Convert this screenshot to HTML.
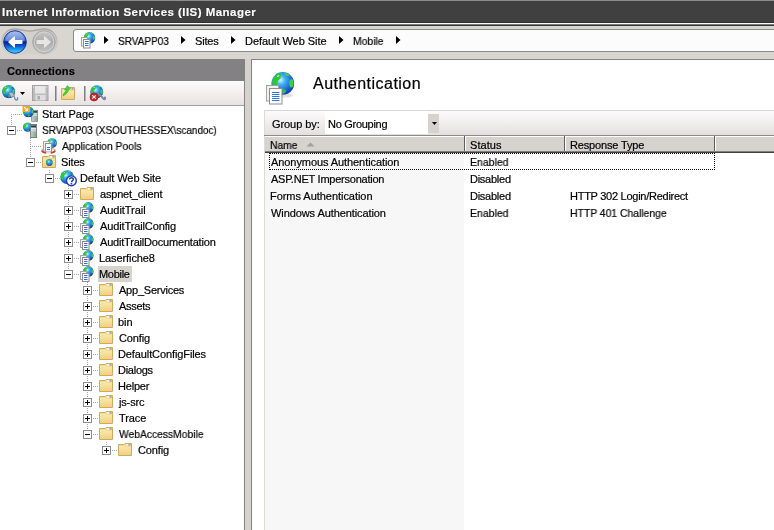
<!DOCTYPE html>
<html><head><meta charset="utf-8">
<style>
*{margin:0;padding:0;box-sizing:border-box}
html,body{width:774px;height:530px;overflow:hidden;background:#fff}
body{position:relative;font-family:"Liberation Sans",sans-serif;font-size:11px;color:#000}
.a{position:absolute}
.t{position:absolute;white-space:nowrap;line-height:13px;height:13px;will-change:transform;-webkit-text-stroke:0.2px currentColor}
svg.i{position:absolute;overflow:visible}
</style></head><body>


<svg width="0" height="0" style="position:absolute">
<defs>
 <radialGradient id="gGlobe" cx="0.4" cy="0.35" r="0.7">
  <stop offset="0" stop-color="#d4f6ff"/><stop offset="0.3" stop-color="#3cb2f2"/><stop offset="0.68" stop-color="#1f68d8"/><stop offset="1" stop-color="#1234a4"/>
 </radialGradient>
 <linearGradient id="gFold" x1="0" y1="0" x2="0" y2="1">
  <stop offset="0" stop-color="#fbe9b0"/><stop offset="1" stop-color="#f0d080"/>
 </linearGradient>
 <linearGradient id="gBack" x1="0" y1="0" x2="0" y2="1">
  <stop offset="0" stop-color="#9ab8f2"/><stop offset="0.42" stop-color="#4a72d0"/><stop offset="0.5" stop-color="#08208a"/><stop offset="0.6" stop-color="#0a3cba"/><stop offset="0.85" stop-color="#1ea4f4"/><stop offset="1" stop-color="#58d8ff"/>
 </linearGradient>
 <linearGradient id="gFwd" x1="0" y1="0" x2="0" y2="1">
  <stop offset="0" stop-color="#c8c8c8"/><stop offset="0.5" stop-color="#acacac"/><stop offset="1" stop-color="#c4c4c4"/>
 </linearGradient>
 <linearGradient id="gCap" x1="0" y1="0" x2="0" y2="1"><stop offset="0" stop-color="#a9a6a1"/><stop offset="0.5" stop-color="#c6c3be"/><stop offset="1" stop-color="#d6d3ce"/></linearGradient>
 <symbol id="globe" viewBox="0 0 24 24">
  <circle cx="12" cy="12" r="11.6" fill="url(#gGlobe)"/>
  <path d="M2.2 7 C4 3.6 7 2 10.5 1.6 C10.2 3.5 9.5 5 10 6.5 C9 8.5 7 8.2 6.5 10.5 C6 12.5 7.2 14.5 5.5 16.5 C4.5 17.2 3.5 16.5 2.6 15.5 C0.8 12.6 1 9.5 2.2 7Z" fill="#2ec82e"/>
  <path d="M6 4.5 C7 3.6 8.2 3.4 8.8 4 C8.4 5 7.2 5.6 6.3 5.5Z" fill="#d8f0b0"/>
  <path d="M13.5 1 C16 1.2 18 2.2 19.2 3.5 C18.3 4.3 17 4 16 4.6 C15 3.8 13.6 2.6 13.5 1Z" fill="#44d444"/>
  <ellipse cx="20.8" cy="12" rx="2.2" ry="4.2" fill="#3fd03f"/>
  <path d="M11 18.5 C12.8 17.6 15.2 18 15.5 19.6 C14.8 21.5 13.2 22.8 11.8 22.5 C11.5 21 11.8 19.8 11 18.5Z" fill="#33c033"/>
 </symbol>
 <symbol id="folder" viewBox="0 0 14 13">
  <path d="M0.5 1.5 H6 L7 0.5 H13.5 V12.5 H0.5Z" fill="#f4d98e" stroke="#cfab60" stroke-width="1"/>
  <path d="M1 3 H6.5 L7.5 4 H13 V12 H1Z" fill="url(#gFold)"/>
  <rect x="8" y="1.3" width="2.5" height="1.2" fill="#ffffff"/><rect x="10.5" y="1.3" width="2" height="1.2" fill="#4f9ae8"/>
 </symbol>
 <symbol id="doc2" viewBox="0 0 10 10">
  <rect x="0.5" y="0.5" width="6" height="7.5" fill="#f2f1ea" stroke="#a0a0a0"/>
  <rect x="2.5" y="2" width="6.5" height="7.5" fill="#fcfcfa" stroke="#8a8a8a"/>
  <path d="M4 4.1 H7.6 M4 5.8 H7.6 M4 7.5 H7.6" stroke="#2a78d8" stroke-width="1"/>
 </symbol>
 <symbol id="app" viewBox="0 0 16 16">
  <use href="#globe" x="2.8" y="-0.1" width="11" height="11"/>
  <rect x="0.5" y="5.5" width="6" height="8" fill="#f5f2e4" stroke="#a6a6a6"/>
  <rect x="2.5" y="7.5" width="6.5" height="8" fill="#fdfdfb" stroke="#8c8c8c"/>
  <path d="M4 9.5 H7.5 M4 11.5 H7.5 M4 13.5 H7.5" stroke="#2f74d6" stroke-width="1" fill="none"/>
 </symbol>
 <symbol id="server" viewBox="0 0 7 12" preserveAspectRatio="none">
  <rect x="0.4" y="0.4" width="6.2" height="11.2" fill="url(#gSrv)" stroke="#6d7680" stroke-width="0.8"/>
  <rect x="1" y="1.3" width="5" height="1.5" fill="#25384a"/>
  <rect x="1" y="3.6" width="5" height="1" fill="#f0f3f6"/>
  <rect x="1" y="5.4" width="5" height="0.8" fill="#dde2e6"/>
  <rect x="4" y="8.6" width="2" height="2" fill="#66d42e"/>
 </symbol>
 <linearGradient id="gSrv" x1="0" y1="0" x2="1" y2="0">
  <stop offset="0" stop-color="#c6ccd2"/><stop offset="1" stop-color="#98a0a8"/>
 </linearGradient>
</defs>
</svg>

<div class="a" style="left:0px;top:0px;width:774px;height:1px;background:#8e8c8e;"></div>
<div class="a" style="left:0px;top:1px;width:774px;height:22px;background:#404040;"></div>
<div class="a" style="left:0px;top:22px;width:774px;height:1px;background:#303030;"></div>
<div class="a" style="left:0px;top:23px;width:774px;height:1px;background:#fafafa;"></div>
<div class="a" style="left:0px;top:24px;width:774px;height:1px;background:#787878;"></div>
<div class="a" style="left:0px;top:25px;width:774px;height:1px;background:#383838;"></div>
<div class="a" style="left:0px;top:26px;width:774px;height:33px;background:#d9d6d1;"></div>
<svg class="i" style="left:0px;top:26px" width="60" height="32" viewBox="0 0 60 32"><path d="M15 3 C20 3 24 5 29.5 5 C35 5 39 3 44 3 C52 3 57 9 57 16 C57 23 52 29 44 29 C39 29 35 27 29.5 27 C24 27 20 29 15 29 C7 29 2 23 2 16 C2 9 7 3 15 3Z" fill="#d3d0cb" stroke="url(#gCap)" stroke-width="1.4"/></svg>
<svg class="i" style="left:3px;top:30px" width="24" height="24" viewBox="0 0 24 24"><circle cx="12" cy="12" r="11.3" fill="url(#gBack)" stroke="#0b2a8c" stroke-width="0.9"/>
<path d="M2.5 11 C3.5 5 8 1.8 12 1.8 C16 1.8 20.5 5 21.5 11 Z" fill="#ffffff" opacity="0.18"/>
<path d="M5 12 L11.3 6.3 Q12 6 12 7 L12 10 L18.5 10 Q19.5 10 19.5 11 L19.5 13 Q19.5 14 18.5 14 L12 14 L12 17 Q12 18 11.3 17.7 Z" fill="#ffffff"/></svg>
<svg class="i" style="left:32px;top:30px" width="24" height="24" viewBox="0 0 24 24"><circle cx="12" cy="12" r="11.3" fill="url(#gFwd)" stroke="#a4a4a4" stroke-width="0.9"/>
<circle cx="12" cy="12" r="9.8" fill="none" stroke="#d8d8d8" stroke-width="0.8"/>
<path d="M19 12 L12.7 6.3 Q12 6 12 7 L12 10 L5.5 10 Q4.5 10 4.5 11 L4.5 13 Q4.5 14 5.5 14 L12 14 L12 17 Q12 18 12.7 17.7 Z" fill="#e6e6e6"/></svg>
<div class="a" style="left:73px;top:29px;width:720px;height:23px;background:#fdfcfd;border:1px solid #8a8a8a;border-radius:3px"></div>
<svg class="i" style="left:80px;top:31px" width="17" height="18" viewBox="0 0 17 18"><use href="#globe" x="3.5" y="0.8" width="12" height="12"/>
<rect x="1.5" y="6.5" width="6" height="8.5" fill="#f5f2e4" stroke="#a6a6a6"/>
<rect x="3.5" y="8.5" width="6.5" height="8.5" fill="#fdfdfb" stroke="#8c8c8c"/>
<path d="M5 10.5 H8.5 M5 12.5 H8.5 M5 14.5 H8.5" stroke="#2f74d6" stroke-width="1" fill="none"/></svg>
<svg class="i" style="left:104px;top:36px" width="5" height="8" viewBox="0 0 5 8"><path d="M0 0 L4.5 4 L0 8Z" fill="#000"/></svg>
<svg class="i" style="left:181px;top:36px" width="5" height="8" viewBox="0 0 5 8"><path d="M0 0 L4.5 4 L0 8Z" fill="#000"/></svg>
<svg class="i" style="left:231px;top:36px" width="5" height="8" viewBox="0 0 5 8"><path d="M0 0 L4.5 4 L0 8Z" fill="#000"/></svg>
<svg class="i" style="left:339px;top:36px" width="5" height="8" viewBox="0 0 5 8"><path d="M0 0 L4.5 4 L0 8Z" fill="#000"/></svg>
<svg class="i" style="left:396px;top:36px" width="5" height="8" viewBox="0 0 5 8"><path d="M0 0 L4.5 4 L0 8Z" fill="#000"/></svg>
<div class="a" style="left:0px;top:59px;width:244px;height:22px;background:#848184;"></div>
<div class="t" style="left:7px;top:65px;letter-spacing:0.12px;font-weight:bold">Connections</div>
<div class="a" style="left:0px;top:81px;width:244px;height:24px;background:linear-gradient(#fdfbfc,#e8e3e3);"></div>
<div class="a" style="left:0px;top:105px;width:244px;height:1px;background:#a4a1a1;"></div>
<div class="a" style="left:244px;top:59px;width:1px;height:471px;background:#848484;"></div>
<div class="a" style="left:245px;top:59px;width:6px;height:471px;background:#d6d3ce;"></div>
<div class="a" style="left:251px;top:59px;width:1px;height:471px;background:#848484;"></div>
<div class="a" style="left:252px;top:59px;width:522px;height:1px;background:#848484;"></div>
<div class="t" style="left:2.00px;top:6px;letter-spacing:0.457px;font:bold 11.5px 'Liberation Sans';line-height:normal;height:auto;color:#fff;text-shadow:0 0 1px #000;">Internet Information Services (IIS) Manager</div>
<div class="t" style="left:118.00px;top:35px;transform:scaleX(0.9094);transform-origin:1px 0;">SRVAPP03</div>
<div class="t" style="left:195.00px;top:35px;letter-spacing:-0.200px;">Sites</div>
<div class="t" style="left:245.00px;top:35px;letter-spacing:-0.053px;">Default Web Site</div>
<div class="t" style="left:353.00px;top:35px;transform:scaleX(0.9400);transform-origin:1px 0;">Mobile</div>
<svg class="i" style="left:1px;top:84px" width="18" height="17" viewBox="0 0 18 17"><use href="#globe" x="0.8" y="0.8" width="13.6" height="13.6"/>
<path d="M13 12.5 C14.5 13.5 13 15.5 15 16 C16.5 16.3 17 15 16.5 13.8" stroke="#6f8fa8" stroke-width="1.4" fill="none" stroke-linecap="round"/>
<path d="M7.5 9 L11 8 L13.5 11.5 L10.5 13.5 Z" fill="#b9c3cc" stroke="#6a7884" stroke-width="0.7"/></svg>
<svg class="i" style="left:20px;top:92px" width="5" height="3" viewBox="0 0 5 3"><path d="M0 0 H5 L2.5 3Z" fill="#000"/></svg>
<svg class="i" style="left:32px;top:85px" width="17" height="16" viewBox="0 0 17 16"><rect x="0.5" y="0.5" width="15.5" height="15" fill="#bdbdbd" stroke="#a2a2a2"/>
<rect x="3" y="1" width="10.5" height="7.5" fill="#e8e8e8"/>
<rect x="3.5" y="10" width="10" height="5.5" fill="#dedede"/><rect x="5.5" y="11" width="2.5" height="3.5" fill="#aaaaaa"/>
<rect x="1.2" y="1.5" width="1" height="1" fill="#f4f4f4"/><rect x="14.3" y="1.5" width="1" height="1" fill="#f4f4f4"/></svg>
<div class="a" style="left:55px;top:86px;width:1px;height:15px;background:#808080;"></div>
<div class="a" style="left:56px;top:86px;width:1px;height:15px;background:#b4b4b4;"></div>
<svg class="i" style="left:61px;top:85px" width="15" height="15" viewBox="0 0 15 15"><use href="#folder" x="0" y="2" width="14" height="13"/>
<path d="M2 11 C2.3 7.8 5 6.8 5.5 4.6 L3.6 4.9 L6.4 0.6 L9.6 4.1 L7.6 4.3 C7.4 7.8 4.6 9.4 2 11Z" fill="#45d43c" stroke="#2aa828" stroke-width="0.6"/></svg>
<div class="a" style="left:84px;top:86px;width:1px;height:15px;background:#808080;"></div>
<div class="a" style="left:85px;top:86px;width:1px;height:15px;background:#b4b4b4;"></div>
<svg class="i" style="left:89px;top:84px" width="18" height="18" viewBox="0 0 18 18"><use href="#globe" x="1" y="1" width="13.5" height="13.5"/>
<path d="M9 10 L12 12 M11 11 C13 12 13 14 15 15 C16 15.5 16.5 14.5 16 13.5" stroke="#7a8a96" stroke-width="2" fill="none" stroke-linecap="round"/>
<circle cx="5" cy="13" r="4" fill="#d42222" stroke="#a01010" stroke-width="0.6"/>
<path d="M3.3 11.3 L6.7 14.7 M6.7 11.3 L3.3 14.7" stroke="#fff" stroke-width="1.2"/></svg>
<svg class="i" style="left:0;top:0" width="244" height="530" viewBox="0 0 244 530"><g fill="#a3a3a3"><rect x="11" y="114" width="1" height="1"/><rect x="11" y="116" width="1" height="1"/><rect x="11" y="118" width="1" height="1"/><rect x="11" y="120" width="1" height="1"/><rect x="11" y="122" width="1" height="1"/><rect x="11" y="124" width="1" height="1"/><rect x="13" y="114" width="1" height="1"/><rect x="15" y="114" width="1" height="1"/><rect x="17" y="114" width="1" height="1"/><rect x="17" y="130" width="1" height="1"/><rect x="19" y="114" width="1" height="1"/><rect x="19" y="130" width="1" height="1"/><rect x="21" y="114" width="1" height="1"/><rect x="21" y="130" width="1" height="1"/><rect x="30" y="138" width="1" height="1"/><rect x="30" y="140" width="1" height="1"/><rect x="30" y="142" width="1" height="1"/><rect x="30" y="144" width="1" height="1"/><rect x="30" y="146" width="1" height="1"/><rect x="30" y="148" width="1" height="1"/><rect x="30" y="150" width="1" height="1"/><rect x="30" y="152" width="1" height="1"/><rect x="30" y="154" width="1" height="1"/><rect x="30" y="156" width="1" height="1"/><rect x="32" y="146" width="1" height="1"/><rect x="34" y="146" width="1" height="1"/><rect x="36" y="146" width="1" height="1"/><rect x="36" y="162" width="1" height="1"/><rect x="38" y="146" width="1" height="1"/><rect x="38" y="162" width="1" height="1"/><rect x="40" y="146" width="1" height="1"/><rect x="40" y="162" width="1" height="1"/><rect x="49" y="170" width="1" height="1"/><rect x="49" y="172" width="1" height="1"/><rect x="55" y="178" width="1" height="1"/><rect x="57" y="178" width="1" height="1"/><rect x="59" y="178" width="1" height="1"/><rect x="68" y="186" width="1" height="1"/><rect x="68" y="188" width="1" height="1"/><rect x="68" y="200" width="1" height="1"/><rect x="68" y="202" width="1" height="1"/><rect x="68" y="204" width="1" height="1"/><rect x="68" y="216" width="1" height="1"/><rect x="68" y="218" width="1" height="1"/><rect x="68" y="220" width="1" height="1"/><rect x="68" y="232" width="1" height="1"/><rect x="68" y="234" width="1" height="1"/><rect x="68" y="236" width="1" height="1"/><rect x="68" y="248" width="1" height="1"/><rect x="68" y="250" width="1" height="1"/><rect x="68" y="252" width="1" height="1"/><rect x="68" y="264" width="1" height="1"/><rect x="68" y="266" width="1" height="1"/><rect x="68" y="268" width="1" height="1"/><rect x="74" y="194" width="1" height="1"/><rect x="74" y="210" width="1" height="1"/><rect x="74" y="226" width="1" height="1"/><rect x="74" y="242" width="1" height="1"/><rect x="74" y="258" width="1" height="1"/><rect x="74" y="274" width="1" height="1"/><rect x="76" y="194" width="1" height="1"/><rect x="76" y="210" width="1" height="1"/><rect x="76" y="226" width="1" height="1"/><rect x="76" y="242" width="1" height="1"/><rect x="76" y="258" width="1" height="1"/><rect x="76" y="274" width="1" height="1"/><rect x="78" y="194" width="1" height="1"/><rect x="78" y="210" width="1" height="1"/><rect x="78" y="226" width="1" height="1"/><rect x="78" y="242" width="1" height="1"/><rect x="78" y="258" width="1" height="1"/><rect x="78" y="274" width="1" height="1"/><rect x="87" y="282" width="1" height="1"/><rect x="87" y="284" width="1" height="1"/><rect x="87" y="296" width="1" height="1"/><rect x="87" y="298" width="1" height="1"/><rect x="87" y="300" width="1" height="1"/><rect x="87" y="312" width="1" height="1"/><rect x="87" y="314" width="1" height="1"/><rect x="87" y="316" width="1" height="1"/><rect x="87" y="328" width="1" height="1"/><rect x="87" y="330" width="1" height="1"/><rect x="87" y="332" width="1" height="1"/><rect x="87" y="344" width="1" height="1"/><rect x="87" y="346" width="1" height="1"/><rect x="87" y="348" width="1" height="1"/><rect x="87" y="360" width="1" height="1"/><rect x="87" y="362" width="1" height="1"/><rect x="87" y="364" width="1" height="1"/><rect x="87" y="376" width="1" height="1"/><rect x="87" y="378" width="1" height="1"/><rect x="87" y="380" width="1" height="1"/><rect x="87" y="392" width="1" height="1"/><rect x="87" y="394" width="1" height="1"/><rect x="87" y="396" width="1" height="1"/><rect x="87" y="408" width="1" height="1"/><rect x="87" y="410" width="1" height="1"/><rect x="87" y="412" width="1" height="1"/><rect x="87" y="424" width="1" height="1"/><rect x="87" y="426" width="1" height="1"/><rect x="87" y="428" width="1" height="1"/><rect x="93" y="290" width="1" height="1"/><rect x="93" y="306" width="1" height="1"/><rect x="93" y="322" width="1" height="1"/><rect x="93" y="338" width="1" height="1"/><rect x="93" y="354" width="1" height="1"/><rect x="93" y="370" width="1" height="1"/><rect x="93" y="386" width="1" height="1"/><rect x="93" y="402" width="1" height="1"/><rect x="93" y="418" width="1" height="1"/><rect x="93" y="434" width="1" height="1"/><rect x="95" y="290" width="1" height="1"/><rect x="95" y="306" width="1" height="1"/><rect x="95" y="322" width="1" height="1"/><rect x="95" y="338" width="1" height="1"/><rect x="95" y="354" width="1" height="1"/><rect x="95" y="370" width="1" height="1"/><rect x="95" y="386" width="1" height="1"/><rect x="95" y="402" width="1" height="1"/><rect x="95" y="418" width="1" height="1"/><rect x="95" y="434" width="1" height="1"/><rect x="97" y="290" width="1" height="1"/><rect x="97" y="306" width="1" height="1"/><rect x="97" y="322" width="1" height="1"/><rect x="97" y="338" width="1" height="1"/><rect x="97" y="354" width="1" height="1"/><rect x="97" y="370" width="1" height="1"/><rect x="97" y="386" width="1" height="1"/><rect x="97" y="402" width="1" height="1"/><rect x="97" y="418" width="1" height="1"/><rect x="97" y="434" width="1" height="1"/><rect x="106" y="442" width="1" height="1"/><rect x="106" y="444" width="1" height="1"/><rect x="112" y="450" width="1" height="1"/><rect x="114" y="450" width="1" height="1"/><rect x="116" y="450" width="1" height="1"/></g></svg>
<svg class="i" style="left:22px;top:106px" width="17" height="17" viewBox="0 0 17 17"><use href="#server" x="9.2" y="3.8" width="7" height="12"/>
<use href="#globe" x="0.8" y="0.2" width="11.2" height="11.2"/>
<rect x="0.5" y="0" width="7.5" height="6" fill="#f5a623"/>
<path d="M2 1.2 L5.2 4.2 M5.6 2.2 V4.6 H3.2" stroke="#fff" stroke-width="1.1" fill="none"/></svg>
<div class="t" style="left:42.00px;top:108px;letter-spacing:0.022px;">Start Page</div>
<svg class="i" style="left:7px;top:126px" width="9" height="9" viewBox="0 0 9 9"><rect x="0.5" y="0.5" width="8" height="8" fill="#fff" stroke="#8c8c8c"/><rect x="2" y="4" width="5" height="1" fill="#000"/></svg>
<svg class="i" style="left:22px;top:122px" width="17" height="17" viewBox="0 0 17 17"><use href="#globe" x="0.8" y="0.3" width="9.6" height="9.6"/>
<use href="#server" x="8" y="2" width="7" height="14"/></svg>
<div class="t" style="left:42.00px;top:124px;transform:scaleX(0.9063);transform-origin:1px 0;">SRVAPP03 (XSOUTHESSEX\scandoc)</div>
<svg class="i" style="left:41px;top:138px" width="17" height="17" viewBox="0 0 17 17"><ellipse cx="7.5" cy="12.6" rx="6.8" ry="2.3" fill="none" stroke="#b4b4b4" stroke-width="1.2"/>
<use href="#globe" x="5.9" y="0" width="10.2" height="10.2"/>
<rect x="2.5" y="3.5" width="6" height="9.5" fill="#f6f3e4" stroke="#a8a8a8"/>
<rect x="4.5" y="5.5" width="6" height="8.5" fill="#fdfdfb" stroke="#929292"/>
<path d="M6 9.5 H9 M6 11.5 H9" stroke="#2f74d6" stroke-width="1" fill="none"/>
<path d="M0.9 12.8 Q2 14.6 5.2 15" stroke="#e2301e" stroke-width="1.7" fill="none"/>
<path d="M14.1 12.8 Q13 14.6 9.8 15" stroke="#e2301e" stroke-width="1.7" fill="none"/>
<path d="M5.2 15 H9.8" stroke="#f4f4f4" stroke-width="1.4"/></svg>
<div class="t" style="left:62.00px;top:140px;transform:scaleX(0.9422);transform-origin:0px 0;">Application Pools</div>
<svg class="i" style="left:26px;top:158px" width="9" height="9" viewBox="0 0 9 9"><rect x="0.5" y="0.5" width="8" height="8" fill="#fff" stroke="#8c8c8c"/><rect x="2" y="4" width="5" height="1" fill="#000"/></svg>
<svg class="i" style="left:41px;top:154px" width="16" height="16" viewBox="0 0 16 16"><use href="#folder" x="1" y="1" width="14" height="13"/><use href="#globe" x="4.8" y="5" width="7" height="7"/></svg>
<div class="t" style="left:61.00px;top:156px;letter-spacing:-0.150px;">Sites</div>
<svg class="i" style="left:45px;top:174px" width="9" height="9" viewBox="0 0 9 9"><rect x="0.5" y="0.5" width="8" height="8" fill="#fff" stroke="#8c8c8c"/><rect x="2" y="4" width="5" height="1" fill="#000"/></svg>
<svg class="i" style="left:58px;top:170px" width="19" height="18" viewBox="0 0 19 18"><use href="#globe" x="2" y="0" width="14.2" height="14.2"/>
<circle cx="13.4" cy="10.8" r="4.9" fill="#fff" stroke="#1c3cb4" stroke-width="1.4"/>
<path d="M11.6 9.5 C11.6 7.2 15.3 7.2 15.3 9.2 C15.3 10.6 13.5 10.7 13.5 12.2" stroke="#1c3cb4" stroke-width="1.5" fill="none"/>
<rect x="12.7" y="13" width="1.6" height="1.5" fill="#1c3cb4"/></svg>
<div class="t" style="left:80.00px;top:172px;letter-spacing:-0.080px;">Default Web Site</div>
<svg class="i" style="left:64px;top:190px" width="9" height="9" viewBox="0 0 9 9"><rect x="0.5" y="0.5" width="8" height="8" fill="#fff" stroke="#8c8c8c"/><rect x="2" y="4" width="5" height="1" fill="#000"/><rect x="4" y="2" width="1" height="5" fill="#000"/></svg>
<svg class="i" style="left:80px;top:187px" width="14" height="13" viewBox="0 0 14 13"><use href="#folder" width="14" height="13"/></svg>
<div class="t" style="left:100.00px;top:188px;letter-spacing:-0.192px;">aspnet_client</div>
<svg class="i" style="left:64px;top:206px" width="9" height="9" viewBox="0 0 9 9"><rect x="0.5" y="0.5" width="8" height="8" fill="#fff" stroke="#8c8c8c"/><rect x="2" y="4" width="5" height="1" fill="#000"/><rect x="4" y="2" width="1" height="5" fill="#000"/></svg>
<svg class="i" style="left:80px;top:202px" width="16" height="16" viewBox="0 0 16 16"><use href="#app" width="16" height="16"/></svg>
<div class="t" style="left:100.00px;top:204px;letter-spacing:-0.044px;">AuditTrail</div>
<svg class="i" style="left:64px;top:222px" width="9" height="9" viewBox="0 0 9 9"><rect x="0.5" y="0.5" width="8" height="8" fill="#fff" stroke="#8c8c8c"/><rect x="2" y="4" width="5" height="1" fill="#000"/><rect x="4" y="2" width="1" height="5" fill="#000"/></svg>
<svg class="i" style="left:80px;top:218px" width="16" height="16" viewBox="0 0 16 16"><use href="#app" width="16" height="16"/></svg>
<div class="t" style="left:100.00px;top:220px;letter-spacing:-0.120px;">AuditTrailConfig</div>
<svg class="i" style="left:64px;top:238px" width="9" height="9" viewBox="0 0 9 9"><rect x="0.5" y="0.5" width="8" height="8" fill="#fff" stroke="#8c8c8c"/><rect x="2" y="4" width="5" height="1" fill="#000"/><rect x="4" y="2" width="1" height="5" fill="#000"/></svg>
<svg class="i" style="left:80px;top:234px" width="16" height="16" viewBox="0 0 16 16"><use href="#app" width="16" height="16"/></svg>
<div class="t" style="left:100.00px;top:236px;letter-spacing:-0.195px;">AuditTrailDocumentation</div>
<svg class="i" style="left:64px;top:254px" width="9" height="9" viewBox="0 0 9 9"><rect x="0.5" y="0.5" width="8" height="8" fill="#fff" stroke="#8c8c8c"/><rect x="2" y="4" width="5" height="1" fill="#000"/><rect x="4" y="2" width="1" height="5" fill="#000"/></svg>
<svg class="i" style="left:80px;top:250px" width="16" height="16" viewBox="0 0 16 16"><use href="#app" width="16" height="16"/></svg>
<div class="t" style="left:99.00px;top:252px;letter-spacing:-0.090px;">Laserfiche8</div>
<svg class="i" style="left:64px;top:270px" width="9" height="9" viewBox="0 0 9 9"><rect x="0.5" y="0.5" width="8" height="8" fill="#fff" stroke="#8c8c8c"/><rect x="2" y="4" width="5" height="1" fill="#000"/></svg>
<svg class="i" style="left:80px;top:266px" width="16" height="16" viewBox="0 0 16 16"><use href="#app" width="16" height="16"/></svg>
<div class="a" style="left:98px;top:266px;width:34px;height:16px;background:#d7d4cf;"></div>
<div class="t" style="left:99.00px;top:268px;letter-spacing:-0.300px;">Mobile</div>
<svg class="i" style="left:83px;top:286px" width="9" height="9" viewBox="0 0 9 9"><rect x="0.5" y="0.5" width="8" height="8" fill="#fff" stroke="#8c8c8c"/><rect x="2" y="4" width="5" height="1" fill="#000"/><rect x="4" y="2" width="1" height="5" fill="#000"/></svg>
<svg class="i" style="left:99px;top:283px" width="14" height="13" viewBox="0 0 14 13"><use href="#folder" width="14" height="13"/></svg>
<div class="t" style="left:119.00px;top:284px;letter-spacing:-0.227px;">App_Services</div>
<svg class="i" style="left:83px;top:302px" width="9" height="9" viewBox="0 0 9 9"><rect x="0.5" y="0.5" width="8" height="8" fill="#fff" stroke="#8c8c8c"/><rect x="2" y="4" width="5" height="1" fill="#000"/><rect x="4" y="2" width="1" height="5" fill="#000"/></svg>
<svg class="i" style="left:99px;top:299px" width="14" height="13" viewBox="0 0 14 13"><use href="#folder" width="14" height="13"/></svg>
<div class="t" style="left:119.00px;top:300px;letter-spacing:-0.300px;">Assets</div>
<svg class="i" style="left:83px;top:318px" width="9" height="9" viewBox="0 0 9 9"><rect x="0.5" y="0.5" width="8" height="8" fill="#fff" stroke="#8c8c8c"/><rect x="2" y="4" width="5" height="1" fill="#000"/><rect x="4" y="2" width="1" height="5" fill="#000"/></svg>
<svg class="i" style="left:99px;top:315px" width="14" height="13" viewBox="0 0 14 13"><use href="#folder" width="14" height="13"/></svg>
<div class="t" style="left:118.00px;top:316px;">bin</div>
<svg class="i" style="left:83px;top:334px" width="9" height="9" viewBox="0 0 9 9"><rect x="0.5" y="0.5" width="8" height="8" fill="#fff" stroke="#8c8c8c"/><rect x="2" y="4" width="5" height="1" fill="#000"/><rect x="4" y="2" width="1" height="5" fill="#000"/></svg>
<svg class="i" style="left:99px;top:331px" width="14" height="13" viewBox="0 0 14 13"><use href="#folder" width="14" height="13"/></svg>
<div class="t" style="left:119.00px;top:332px;letter-spacing:-0.120px;">Config</div>
<svg class="i" style="left:83px;top:350px" width="9" height="9" viewBox="0 0 9 9"><rect x="0.5" y="0.5" width="8" height="8" fill="#fff" stroke="#8c8c8c"/><rect x="2" y="4" width="5" height="1" fill="#000"/><rect x="4" y="2" width="1" height="5" fill="#000"/></svg>
<svg class="i" style="left:99px;top:347px" width="14" height="13" viewBox="0 0 14 13"><use href="#folder" width="14" height="13"/></svg>
<div class="t" style="left:118.00px;top:348px;letter-spacing:-0.106px;">DefaultConfigFiles</div>
<svg class="i" style="left:83px;top:366px" width="9" height="9" viewBox="0 0 9 9"><rect x="0.5" y="0.5" width="8" height="8" fill="#fff" stroke="#8c8c8c"/><rect x="2" y="4" width="5" height="1" fill="#000"/><rect x="4" y="2" width="1" height="5" fill="#000"/></svg>
<svg class="i" style="left:99px;top:363px" width="14" height="13" viewBox="0 0 14 13"><use href="#folder" width="14" height="13"/></svg>
<div class="t" style="left:118.00px;top:364px;letter-spacing:-0.267px;">Dialogs</div>
<svg class="i" style="left:83px;top:382px" width="9" height="9" viewBox="0 0 9 9"><rect x="0.5" y="0.5" width="8" height="8" fill="#fff" stroke="#8c8c8c"/><rect x="2" y="4" width="5" height="1" fill="#000"/><rect x="4" y="2" width="1" height="5" fill="#000"/></svg>
<svg class="i" style="left:99px;top:379px" width="14" height="13" viewBox="0 0 14 13"><use href="#folder" width="14" height="13"/></svg>
<div class="t" style="left:118.00px;top:380px;letter-spacing:-0.200px;">Helper</div>
<svg class="i" style="left:83px;top:398px" width="9" height="9" viewBox="0 0 9 9"><rect x="0.5" y="0.5" width="8" height="8" fill="#fff" stroke="#8c8c8c"/><rect x="2" y="4" width="5" height="1" fill="#000"/><rect x="4" y="2" width="1" height="5" fill="#000"/></svg>
<svg class="i" style="left:99px;top:395px" width="14" height="13" viewBox="0 0 14 13"><use href="#folder" width="14" height="13"/></svg>
<div class="t" style="left:119.00px;top:396px;letter-spacing:-0.160px;">js-src</div>
<svg class="i" style="left:83px;top:414px" width="9" height="9" viewBox="0 0 9 9"><rect x="0.5" y="0.5" width="8" height="8" fill="#fff" stroke="#8c8c8c"/><rect x="2" y="4" width="5" height="1" fill="#000"/><rect x="4" y="2" width="1" height="5" fill="#000"/></svg>
<svg class="i" style="left:99px;top:411px" width="14" height="13" viewBox="0 0 14 13"><use href="#folder" width="14" height="13"/></svg>
<div class="t" style="left:119.00px;top:412px;letter-spacing:-0.100px;">Trace</div>
<svg class="i" style="left:83px;top:430px" width="9" height="9" viewBox="0 0 9 9"><rect x="0.5" y="0.5" width="8" height="8" fill="#fff" stroke="#8c8c8c"/><rect x="2" y="4" width="5" height="1" fill="#000"/></svg>
<svg class="i" style="left:99px;top:427px" width="14" height="13" viewBox="0 0 14 13"><use href="#folder" width="14" height="13"/></svg>
<div class="t" style="left:119.00px;top:428px;transform:scaleX(0.9360);transform-origin:0px 0;">WebAccessMobile</div>
<svg class="i" style="left:102px;top:446px" width="9" height="9" viewBox="0 0 9 9"><rect x="0.5" y="0.5" width="8" height="8" fill="#fff" stroke="#8c8c8c"/><rect x="2" y="4" width="5" height="1" fill="#000"/><rect x="4" y="2" width="1" height="5" fill="#000"/></svg>
<svg class="i" style="left:118px;top:443px" width="14" height="13" viewBox="0 0 14 13"><use href="#folder" width="14" height="13"/></svg>
<div class="t" style="left:138.00px;top:444px;letter-spacing:-0.120px;">Config</div>
<svg class="i" style="left:265px;top:70px" width="32" height="35" viewBox="0 0 32 35"><ellipse cx="20" cy="25.5" rx="8" ry="2" fill="#000" opacity="0.12"/>
<use href="#globe" x="6" y="1.7" width="23.5" height="23.5"/>
<rect x="1.5" y="15.5" width="12" height="15.5" fill="#f4f2e6" stroke="#a2a2a2"/>
<rect x="4.5" y="18.5" width="12.5" height="15.5" fill="#fdfdfb" stroke="#8e8e8e"/>
<path d="M7 22.5 H14.5 M7 24.5 H14.5 M7 26.5 H14.5 M7 28.5 H14.5 M7 30.5 H14.5" stroke="#2f78d2" stroke-width="1"/></svg>
<div class="t" style="left:313.00px;top:75px;letter-spacing:0.477px;font:16px 'Liberation Sans';line-height:normal;height:auto;">Authentication</div>
<div class="a" style="left:264px;top:110px;width:510px;height:25px;background:linear-gradient(#fdfcfc,#e3dfdf);border-top:1px solid #d8d5d5"></div>
<div class="a" style="left:264px;top:110px;width:1px;height:420px;background:#dedbd6;"></div>
<div class="t" style="left:272.00px;top:118px;letter-spacing:-0.075px;">Group by:</div>
<div class="a" style="left:325px;top:111px;width:103px;height:23px;background:#ffffff;"></div>
<div class="a" style="left:428px;top:114px;width:11px;height:19px;background:#d6d3ce;"></div>
<svg class="i" style="left:432px;top:122px" width="5" height="3" viewBox="0 0 5 3"><path d="M0 0 H5 L2.5 3Z" fill="#000"/></svg>
<div class="t" style="left:328.00px;top:118px;letter-spacing:-0.280px;">No Grouping</div>
<div class="a" style="left:264px;top:135px;width:510px;height:1px;background:#8a8a8a;"></div>
<div class="a" style="left:265px;top:136px;width:509px;height:15px;background:#d6d3ce;"></div>
<div class="a" style="left:265px;top:136px;width:509px;height:1px;background:#ffffff;"></div>
<div class="a" style="left:265px;top:151px;width:509px;height:1px;background:#808080;"></div>
<div class="a" style="left:265px;top:152px;width:509px;height:1px;background:#404040;"></div>
<div class="a" style="left:464px;top:136px;width:1px;height:15px;background:#5c5c5c;"></div>
<div class="a" style="left:465px;top:136px;width:1px;height:15px;background:#ffffff;"></div>
<div class="a" style="left:564px;top:136px;width:1px;height:15px;background:#5c5c5c;"></div>
<div class="a" style="left:565px;top:136px;width:1px;height:15px;background:#ffffff;"></div>
<div class="a" style="left:714px;top:136px;width:1px;height:15px;background:#5c5c5c;"></div>
<div class="a" style="left:715px;top:136px;width:1px;height:15px;background:#ffffff;"></div>
<div class="t" style="left:270.00px;top:139px;transform:scaleX(0.9333);transform-origin:1px 0;">Name</div>
<svg class="i" style="left:306px;top:142px" width="9" height="5" viewBox="0 0 9 5"><path d="M0.5 4.5 L4.5 0.5 L8.5 4.5Z" fill="#a0a0a0"/></svg>
<div class="t" style="left:470.00px;top:139px;letter-spacing:0.040px;">Status</div>
<div class="t" style="left:570.00px;top:139px;letter-spacing:-0.150px;">Response Type</div>
<div class="a" style="left:265px;top:153px;width:199px;height:377px;background:#f7f7f7;"></div>
<div class="t" style="left:271.00px;top:156px;letter-spacing:-0.078px;">Anonymous Authentication</div>
<div class="t" style="left:470.00px;top:156px;transform:scaleX(0.9526);transform-origin:1px 0;">Enabled</div>
<div class="t" style="left:271.00px;top:173px;letter-spacing:-0.240px;">ASP.NET Impersonation</div>
<div class="t" style="left:470.00px;top:173px;letter-spacing:-0.257px;">Disabled</div>
<div class="t" style="left:270.00px;top:190px;letter-spacing:-0.042px;">Forms Authentication</div>
<div class="t" style="left:470.00px;top:190px;letter-spacing:-0.257px;">Disabled</div>
<div class="t" style="left:570.00px;top:190px;letter-spacing:-0.264px;">HTTP 302 Login/Redirect</div>
<div class="t" style="left:271.00px;top:207px;letter-spacing:-0.086px;">Windows Authentication</div>
<div class="t" style="left:470.00px;top:207px;transform:scaleX(0.9526);transform-origin:1px 0;">Enabled</div>
<div class="t" style="left:570.00px;top:207px;transform:scaleX(0.9420);transform-origin:1px 0;">HTTP 401 Challenge</div>
<div class="a" style="left:269px;top:153px;width:446px;height:17px;border:1px dotted #000"></div>
</body></html>
